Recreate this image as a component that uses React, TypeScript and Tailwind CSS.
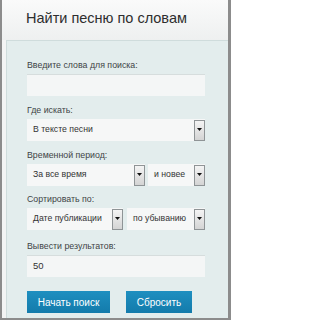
import * as React from "react";

const font = { fontFamily: '"Liberation Sans", Arial, sans-serif' };

function Arrow() {
  return (
    <div className="w-[11px] h-[21px] shrink-0 border border-[#8f9496] bg-gradient-to-b from-[#f4f4f4] to-[#d4d4d4] flex items-center justify-center">
      <svg width="5" height="4" viewBox="0 0 5 4">
        <polygon points="0,0 5,0 2.5,3" fill="#111" />
      </svg>
    </div>
  );
}

function Select({ text, className }: { text: string; className: string }) {
  return (
    <div className={["h-[22px] bg-[#f6f7f7] flex items-center justify-between pl-[6px]", className].join(" ")}>
      <span className="text-[8.7px] text-[#333] whitespace-nowrap">{text}</span>
      <Arrow />
    </div>
  );
}

function Label({ children }: { children: React.ReactNode }) {
  return <div className="text-[8.8px] leading-[11px] text-[#3f4446] mb-[3px] whitespace-nowrap">{children}</div>;
}

export default function App() {
  return (
    <div className="w-[231px] h-[320px] overflow-hidden bg-[#f3f4f4] border-l-[2px] border-r-[3px] border-b-[2px] border-[#8c8c8c] flex flex-col" style={font}>
      <div className="h-[40px] shrink-0 pl-[24px] pt-[10px] text-[14.5px] text-[#2e2e2e] leading-[17px] bg-gradient-to-b from-[#fafafa] to-[#eef0f0]">
        Найти песню по словам
      </div>
      <div className="flex-1 ml-[4px] bg-[#e3eded] border-t border-l border-[#cfdcdc] pl-[20px] pt-[19px] flex flex-col">
        <Label>Введите слова для поиска:</Label>
        <div className="w-[178px] h-[22px] bg-[#f4f6f6] border-t border-[#d6dddd]" />

        <div className="mt-[9px]">
          <Label>Где искать:</Label>
        </div>
        <Select text="В тексте песни" className="w-[178px]" />

        <div className="mt-[9px]">
          <Label>Временной период:</Label>
        </div>
        <div className="flex gap-[3px]">
          <Select text="За все время" className="w-[118px]" />
          <Select text="и новее" className="w-[57px]" />
        </div>

        <div className="mt-[8px]">
          <Label>Сортировать по:</Label>
        </div>
        <div className="flex gap-[4px]">
          <Select text="Дате публикации" className="w-[96px]" />
          <Select text="по убыванию" className="w-[78px]" />
        </div>

        <div className="mt-[11px]">
          <Label>Вывести результатов:</Label>
        </div>
        <div className="w-[178px] h-[22px] bg-[#f4f6f6] border-t border-[#d6dddd] pl-[6px] flex items-center text-[9.5px] text-[#333]">
          50
        </div>

        <div className="flex mt-[14px] gap-[16px]">
          <button className="w-[83px] h-[22px] bg-gradient-to-b from-[#1e8fc0] to-[#137bab] text-white text-[10px]">Начать поиск</button>
          <button className="w-[66px] h-[22px] bg-gradient-to-b from-[#1e8fc0] to-[#137bab] text-white text-[10px]">Сбросить</button>
        </div>
      </div>
    </div>
  );
}
